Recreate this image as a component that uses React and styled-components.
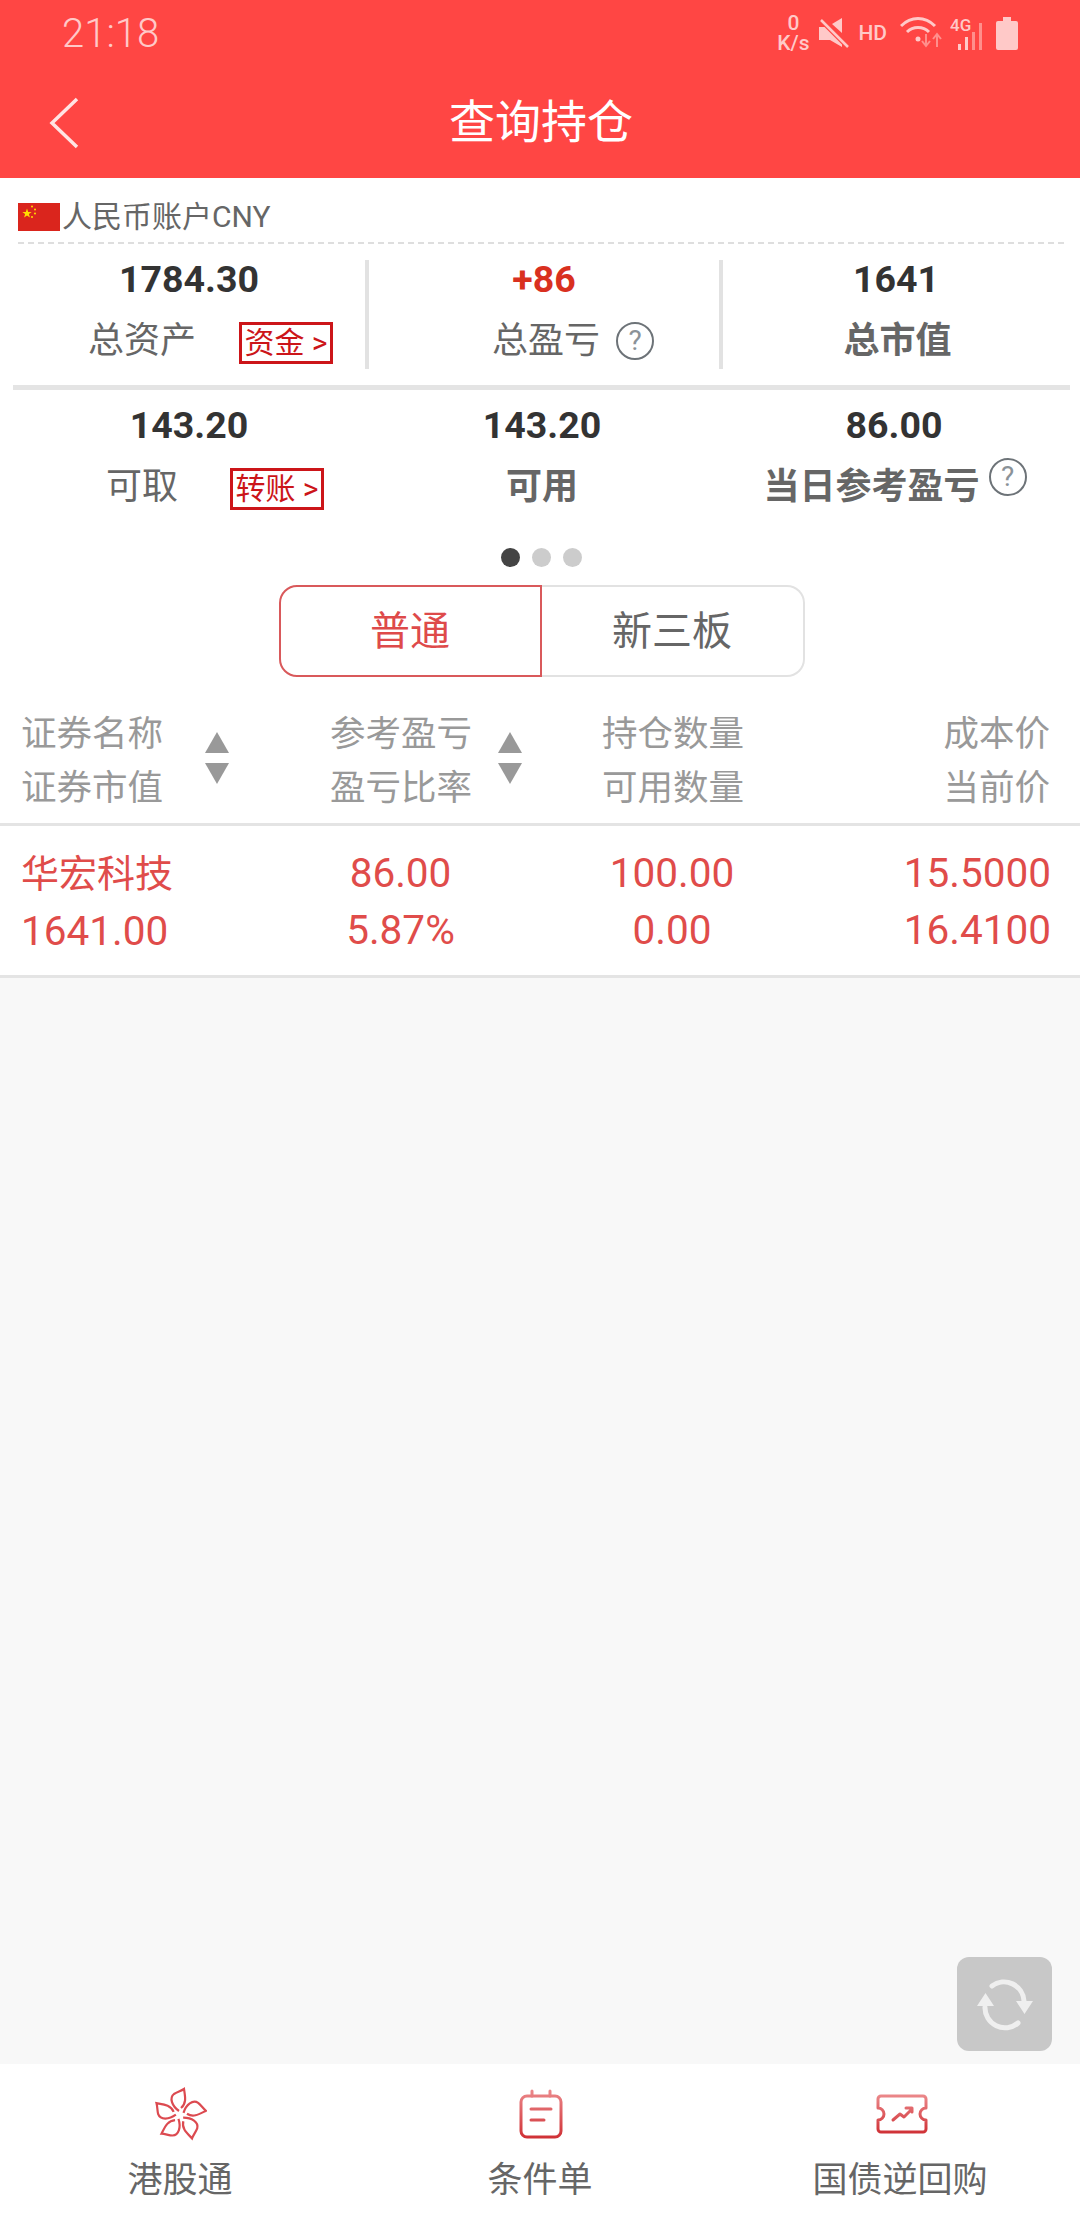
import React from "react";
import styled, { createGlobalStyle } from "styled-components";

const GlobalStyle = createGlobalStyle`
  html, body { margin: 0; padding: 0; background: #fff; }
  body { font-family: Roboto, "Noto Sans CJK SC", sans-serif; }
  * { box-sizing: border-box; }
`;

const Page = styled.div`
  width: 1080px;
  height: 2220px;
  display: flex;
  flex-direction: column;
  overflow: hidden;
  background: #fff;
`;

// Header

const Header = styled.header`
  height: 178px;
  background: #ff4644;
  display: flex;
  flex-direction: column;
`;

const StatusBar = styled.div`
  height: 60px;
  padding: 0 62px 0 62px;
  display: flex;
  align-items: center;
  justify-content: space-between;
  color: #ffc9c8;
`;

const Clock = styled.span`
  font-size: 40px;
  font-weight: 300;
  margin-top: 6px;
`;

const StatusIcons = styled.div`
  display: flex;
  align-items: center;
  gap: 8px;
  height: 60px;
  padding-top: 6px;
`;

const Speed = styled.div`
  width: 34px;
  font-size: 21px;
  font-weight: 500;
  line-height: 20px;
  text-align: center;
`;

const Hd = styled.span`
  font-size: 21px;
  font-weight: 500;
  margin: 0 5px 0 0;
`;

const NavBar = styled.div`
  flex: 1;
  display: flex;
  align-items: center;
  justify-content: center;
  position: relative;
  color: #fff;
  font-size: 46px;
  padding: 0 0 2px 2px;
`;

const BackIcon = styled.svg`
  position: absolute;
  left: 48px;
  top: 36px;
`;

// Account summary

const AccountLine = styled.div`
  margin: 0 16px 0 18px;
  padding: 25px 0 11px;
  display: flex;
  align-items: center;
  border-bottom: 2px dashed #dedede;
  color: #666;
  font-size: 30px;
  line-height: 28px;
`;

const Flag = styled.svg`
  display: block;
  margin-right: 2px;
`;

const SummaryGrid = styled.div`
  display: grid;
  grid-template-columns: 352px 354px 350px;
  margin: ${(p) => p.$margin};
  padding-left: 13px;
`;

const Cell = styled.div`
  height: ${(p) => (p.$tall ? "109px" : "104px")};
  border-left: ${(p) => (p.$divider ? "4px solid #e2e2e2" : "0")};
  display: flex;
  flex-direction: column;
  align-items: center;
`;

const Value = styled.div`
  font-size: 37.5px;
  line-height: 38px;
  font-weight: 700;
  color: ${(p) => p.$color || "#333"};
`;

const LabelRow = styled.div`
  height: 44px;
  margin-top: 20px;
  display: flex;
  align-items: flex-start;
  padding-left: ${(p) => p.$shift || 0}px;
`;

const Label = styled.span`
  font-size: 36px;
  line-height: 46px;
  color: #666;
  font-weight: ${(p) => (p.$bold ? 700 : 400)};
`;

const LinkBox = styled.span`
  width: 94px;
  height: 42px;
  margin: 4px 0 0 ${(p) => p.$gap}px;
  border: 3px solid #cc1519;
  color: #cc1519;
  font-size: 30px;
  line-height: 36px;
  text-align: center;
  white-space: nowrap;
`;

const Help = styled.span`
  width: 38px;
  height: 38px;
  margin: ${(p) => p.$margin};
  border: 2px solid #6d7378;
  border-radius: 50%;
  color: #8b9298;
  font-size: 28px;
  line-height: 34px;
  text-align: center;
`;

const Rule = styled.div`
  height: 5px;
  margin: 16px 10px 0 13px;
  background: #e4e4e4;
`;

const Dots = styled.div`
  margin-top: 38px;
  display: flex;
  justify-content: center;
  gap: 12px;
  padding-left: 3px;
`;

const Dot = styled.span`
  width: 19px;
  height: 19px;
  border-radius: 50%;
  background: ${(p) => (p.$active ? "#444" : "#ccc")};
`;

const Segment = styled.div`
  margin-top: 18px;
  display: flex;
  justify-content: center;
  padding-left: 3px;
`;

const SegmentTab = styled.div`
  width: 263px;
  height: 92px;
  display: flex;
  align-items: center;
  justify-content: center;
  padding-bottom: 6px;
  font-size: 40px;
  color: ${(p) => (p.$active ? "#de4a4a" : "#666")};
  border: 2px solid ${(p) => (p.$active ? "#d9595b" : "#e2e2e2")};
  border-left-width: ${(p) => (p.$active ? "2px" : "0")};
  border-radius: ${(p) => (p.$active ? "18px 0 0 18px" : "0 18px 18px 0")};
`;

// Positions table

const HeadRow = styled.div`
  display: grid;
  grid-template-columns: 309px 195px 296px 229px;
  padding: 31px 0 8px 21px;
  border-bottom: 3px solid #e4e4e4;
  color: #999;
  font-size: 35.5px;
  line-height: 53.500px;
  white-space: nowrap;
`;

const HeadCell = styled.div`
  display: flex;
  align-items: center;
  justify-content: ${(p) => p.$justify || "flex-start"};
  text-align: ${(p) => p.$align || "left"};
`;

const SortIcon = styled.svg`
  display: block;
  flex: none;
  margin: -7px 0 0 ${(p) => p.$gap}px;
`;

const DataRow = styled.div`
  display: grid;
  grid-template-columns: 279px 201px 342px 208px;
  padding: 19px 0 15px 21px;
  border-bottom: 3px solid #e4e4e4;
  color: #e04c4a;
  font-size: 40.5px;
  line-height: 57px;
`;

const DataCell = styled.div`
  text-align: ${(p) => p.$align || "left"};
`;

const StockName = styled.span`
  font-size: 38px;
`;

const Body = styled.div`
  flex: 1;
  background: #f8f8f8;
  position: relative;
`;

const RefreshButton = styled.div`
  position: absolute;
  right: 28px;
  bottom: 13px;
  width: 95px;
  height: 94px;
  border-radius: 12px;
  background: #c8c8c8;
  display: flex;
  align-items: center;
  justify-content: center;
`;

// Tab bar

const TabBar = styled.nav`
  height: 156px;
  background: #fff;
  display: grid;
  grid-template-columns: repeat(3, 1fr);
`;

const TabItem = styled.div`
  padding-top: 22px;
  display: flex;
  flex-direction: column;
  align-items: center;
`;

const TabIcon = styled.div`
  height: 56px;
  display: flex;
  align-items: center;
  justify-content: center;
  padding-left: ${(p) => p.$shift || 0}px;
`;

const TabLabel = styled.span`
  margin-top: 18px;
  height: 37px;
  overflow: hidden;
  font-size: 35px;
  line-height: 41px;
  color: #666;
`;

const MuteIcon = () => (
  <svg width="32" height="32" viewBox="0 0 32 32" fill="#ffc9c8">
    <path d="M24 1v15L14 7z" />
    <path d="M1 10h8l15 15v5L12 23H1z" />
    <path d="M2 2l28 28" stroke="#ff4644" strokeWidth="5" />
    <path d="M3 3l27 27" stroke="#ffc9c8" strokeWidth="2.5" />
  </svg>
);

const WifiIcon = () => (
  <svg width="42" height="36" viewBox="0 0 42 36" fill="none">
    <path d="M1 11C11 1 25 1 35 11" stroke="#ffc9c8" strokeWidth="3" />
    <path d="M7 17C13 11 23 11 29 17" stroke="#ffc9c8" strokeWidth="3" />
    <circle cx="18" cy="24" r="2.5" fill="#ffc9c8" />
    <path d="M26 19v11M22 26l4 5 4-5" stroke="#ff8f8c" strokeWidth="2" />
    <path d="M37 32V20M33 24l4-5 4 5" stroke="#ff8f8c" strokeWidth="2" />
  </svg>
);

const SignalIcon = () => (
  <svg width="38" height="40" viewBox="0 0 38 40">
    <text x="0" y="18" fontFamily="Roboto" fontWeight="500" fontSize="17" fill="#ffc9c8">4G</text>
    <rect x="8" y="31" width="3" height="6" fill="#ffc9c8" />
    <rect x="15" y="24" width="3" height="13" fill="#ffc9c8" />
    <rect x="22" y="19" width="3" height="18" fill="#ff8f8c" />
    <rect x="29" y="10" width="3" height="27" fill="#ff8f8c" />
  </svg>
);

const BatteryIcon = () => (
  <svg width="22" height="34" viewBox="0 0 22 34" fill="#ffc9c8">
    <path d="M7 1h8v4h5a2 2 0 0 1 2 2v25a2 2 0 0 1-2 2H2a2 2 0 0 1-2-2V7a2 2 0 0 1 2-2h5z" />
  </svg>
);

const HelpMark = ({ margin }) => <Help $margin={margin}>?</Help>;

const SortArrows = ({ gap }) => (
  <SortIcon $gap={gap} width="26" height="52" viewBox="0 0 26 52" fill="#999">
    <path d="M13 0l12 21H1z" />
    <path d="M1 31h24L13 52z" />
  </SortIcon>
);

const CnFlag = () => (
  <Flag width="42" height="28" viewBox="0 0 42 28">
    <rect width="42" height="28" fill="#da251d" />
    <path d="M9 5.5l1.2 3.4h3.5l-2.8 2.1 1 3.4L9 12.4l-2.9 2 1-3.4-2.8-2.1h3.5z" fill="#ffde00" />
    <circle cx="14" cy="3.5" r="1" fill="#ffde00" />
    <circle cx="17" cy="6.5" r="1" fill="#ffde00" />
    <circle cx="17" cy="10.5" r="1" fill="#ffde00" />
    <circle cx="14" cy="14" r="1" fill="#ffde00" />
  </Flag>
);

const petal = "M-1-4C-8-9-11-17-6-21-3-23 1-24 4-26 5-19 7-12 1-7";

const FlowerIcon = () => (
  <svg width="54" height="56" viewBox="0 0 54 56" fill="none">
    <g transform="translate(27 29)" stroke="#dc4a50" strokeWidth="2.2">
      {[0, 72, 144, 216, 288].map((deg) => (
        <path key={deg} d={petal} transform={`rotate(${deg})`} />
      ))}
    </g>
  </svg>
);

const CalendarIcon = () => (
  <svg width="44" height="50" viewBox="0 0 44 50" fill="none">
    <defs>
      <linearGradient id="calStroke" gradientUnits="userSpaceOnUse" x1="0" y1="0" x2="0" y2="50">
        <stop offset="0" stopColor="#ec8a8c" />
        <stop offset="1" stopColor="#cf2f34" />
      </linearGradient>
    </defs>
    <g stroke="url(#calStroke)" strokeWidth="3" strokeLinecap="round">
      <rect x="2" y="7" width="40" height="41" rx="6" />
      <path d="M13 2v5M31 2v5M12 20h20M12 31h13" />
    </g>
  </svg>
);

const TicketIcon = () => (
  <svg width="52" height="40" viewBox="0 0 52 40" fill="none">
    <defs>
      <linearGradient id="ticketStroke" gradientUnits="userSpaceOnUse" x1="0" y1="0" x2="0" y2="40">
        <stop offset="0" stopColor="#ec8a8c" />
        <stop offset="1" stopColor="#cf2f34" />
      </linearGradient>
    </defs>
    <g stroke="url(#ticketStroke)" strokeWidth="3" strokeLinejoin="round" strokeLinecap="round">
      <path d="M5 2h42a3 3 0 0 1 3 3v9a6 6 0 0 0 0 12v9a3 3 0 0 1-3 3H5a3 3 0 0 1-3-3v-9a6 6 0 0 0 0-12V5a3 3 0 0 1 3-3z" />
      <path d="M17 26l7-6 4 3 8-8M30 14h6v4" />
    </g>
  </svg>
);

const RefreshIcon = () => (
  <svg width="62" height="54" viewBox="0 0 62 54" fill="none">
    <path d="M18 9A20 20 0 0 1 50 24" stroke="#efefef" strokeWidth="5" strokeLinecap="round" />
    <path d="M44 46A20 20 0 0 1 11 30" stroke="#efefef" strokeWidth="5" strokeLinecap="round" />
    <path d="M42 24h17l-8.500 13zM3 29h17l-8.500-13z" fill="#efefef" />
  </svg>
);

const App = () => (
  <Page>
    <GlobalStyle />
    <Header>
      <StatusBar>
        <Clock>21:18</Clock>
        <StatusIcons>
          <Speed>
            0<br />K/s
          </Speed>
          <MuteIcon />
          <Hd>HD</Hd>
          <WifiIcon />
          <SignalIcon />
          <BatteryIcon />
        </StatusIcons>
      </StatusBar>
      <NavBar>
        <BackIcon width="32" height="54" viewBox="0 0 32 54" fill="none">
          <path d="M29 3L4 27l25 24" stroke="#ffe4e3" strokeWidth="3.500" />
        </BackIcon>
        查询持仓
      </NavBar>
    </Header>

    <AccountLine>
      <CnFlag />
      人民币账户CNY
    </AccountLine>

    <SummaryGrid $margin="16px 0 0">
      <Cell $tall>
        <Value>1784.30</Value>
        <LabelRow $shift={43}>
          <Label>总资产</Label>
          <LinkBox $gap={43}>资金 &gt;</LinkBox>
        </LabelRow>
      </Cell>
      <Cell $tall $divider>
        <Value $color="#d9301f">+86</Value>
        <LabelRow $shift={58}>
          <Label>总盈亏</Label>
          <HelpMark margin="4px 0 0 16px" />
        </LabelRow>
      </Cell>
      <Cell $tall $divider>
        <Value>1641</Value>
        <LabelRow $shift={3}>
          <Label $bold>总市值</Label>
        </LabelRow>
      </Cell>
    </SummaryGrid>

    <Rule />

    <SummaryGrid $margin="16px 0 0">
      <Cell>
        <Value>143.20</Value>
        <LabelRow $shift={52}>
          <Label>可取</Label>
          <LinkBox $gap={52}>转账 &gt;</LinkBox>
        </LabelRow>
      </Cell>
      <Cell>
        <Value>143.20</Value>
        <LabelRow>
          <Label $bold>可用</Label>
        </LabelRow>
      </Cell>
      <Cell>
        <Value>86.00</Value>
        <LabelRow $shift={2}>
          <Label $bold>当日参考盈亏</Label>
          <HelpMark margin="-6px 0 0 9px" />
        </LabelRow>
      </Cell>
    </SummaryGrid>

    <Dots>
      <Dot $active />
      <Dot />
      <Dot />
    </Dots>

    <Segment>
      <SegmentTab $active>普通</SegmentTab>
      <SegmentTab>新三板</SegmentTab>
    </Segment>

    <HeadRow>
      <HeadCell>
        <div>
          证券名称
          <br />
          证券市值
        </div>
        <SortArrows gap={41} />
      </HeadCell>
      <HeadCell>
        <div>
          参考盈亏
          <br />
          盈亏比率
        </div>
        <SortArrows gap={25} />
      </HeadCell>
      <HeadCell $justify="center" $align="center">
        <div>
          持仓数量
          <br />
          可用数量
        </div>
      </HeadCell>
      <HeadCell $justify="flex-end" $align="right">
        <div>
          成本价
          <br />
          当前价
        </div>
      </HeadCell>
    </HeadRow>

    <DataRow>
      <DataCell>
        <StockName>华宏科技</StockName>
        <br />
        1641.00
      </DataCell>
      <DataCell $align="center">
        86.00
        <br />
        5.87%
      </DataCell>
      <DataCell $align="center">
        100.00
        <br />
        0.00
      </DataCell>
      <DataCell $align="right">
        15.5000
        <br />
        16.4100
      </DataCell>
    </DataRow>

    <Body>
      <RefreshButton>
        <RefreshIcon />
      </RefreshButton>
    </Body>

    <TabBar>
      <TabItem>
        <TabIcon>
          <FlowerIcon />
        </TabIcon>
        <TabLabel>港股通</TabLabel>
      </TabItem>
      <TabItem>
        <TabIcon $shift={1}>
          <CalendarIcon />
        </TabIcon>
        <TabLabel>条件单</TabLabel>
      </TabItem>
      <TabItem>
        <TabIcon $shift={4}>
          <TicketIcon />
        </TabIcon>
        <TabLabel>国债逆回购</TabLabel>
      </TabItem>
    </TabBar>
  </Page>
);

export default App;
